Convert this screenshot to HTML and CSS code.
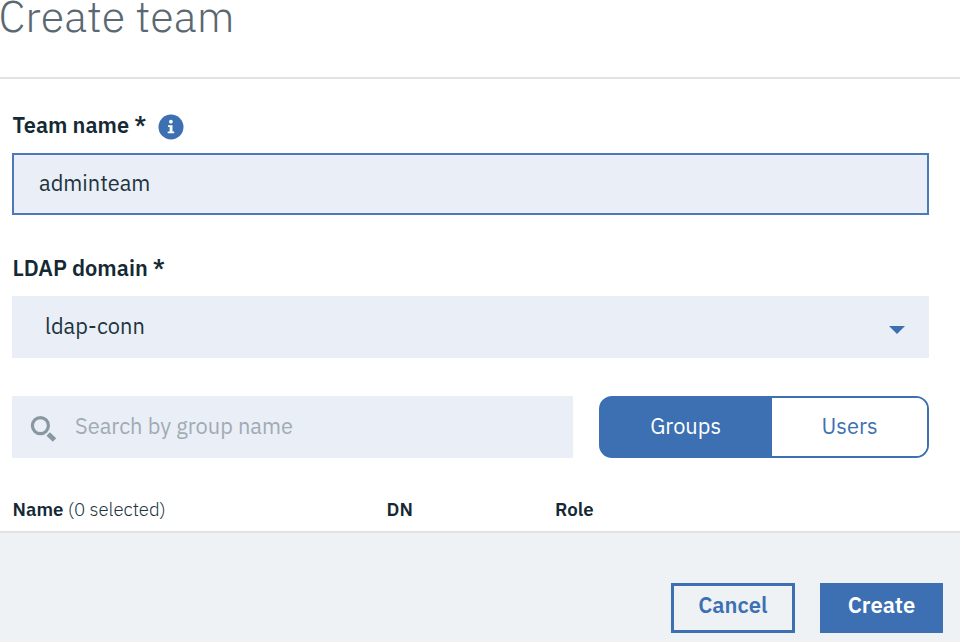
FILE: index.html
```
<!DOCTYPE html>
<html lang="en">
<head>
<meta charset="utf-8">
<title>Create team</title>
<link rel="stylesheet" href="styles.css">
</head>
<body>
<main class="dialog">
  <header class="header"><h1 class="title">Create team</h1></header>
  <section class="form">
    <div class="label label-team"><span class="team-text">Team name *</span>
      <svg class="info" viewBox="0 0 26 26" aria-hidden="true"><circle cx="13" cy="13" r="12.5" fill="#3d70b2"/><circle cx="12.9" cy="7.7" r="1.9" fill="#fff"/><path d="M10 11.2h4.5v6.2h1.7v1.9H9.7v-1.9h1.9v-4.3H10z" fill="#fff"/></svg>
    </div>
    <div class="field field-active"><span class="value-team">adminteam</span></div>
    <div class="label label-domain"><span class="domain-text">LDAP domain *</span></div>
    <div class="field select"><span class="value-domain">ldap-conn</span>
      <svg class="caret" viewBox="0 0 16 8" aria-hidden="true"><path d="M0 0h16L8 8z" fill="#3d70b2"/></svg>
    </div>
    <div class="filters">
      <div class="search">
        <svg class="glass" viewBox="0 0 27 27" aria-hidden="true"><circle cx="10.4" cy="9.6" r="8" fill="none" stroke="#8897a2" stroke-width="3.2"/><path d="M18.2 18l6.3 6" stroke="#8897a2" stroke-width="5"/></svg>
        <span class="placeholder">Search by group name</span>
      </div>
      <div class="switch"><div class="option selected"><span class="groups">Groups</span></div><div class="option"><span class="users">Users</span></div></div>
    </div>
    <div class="columns"><div><b class="name">Name</b> <span class="count">(0 selected)</span></div><b class="dn">DN</b><b class="role">Role</b></div>
  </section>
  <footer class="footer">
    <div class="button cancel"><span class="cancel-text">Cancel</span></div>
    <div class="button create"><span class="create-text">Create</span></div>
  </footer>
</main>
</body>
</html>
```
FILE: styles.css
```
* { box-sizing: border-box; }
body { margin: 0; font-family: "IBM Plex Sans", Roboto, "Liberation Sans", sans-serif; font-size: 21.8px; line-height: 26px; color: #20343f; background: #fff; overflow: hidden; }
span, b { white-space: nowrap; }
.dialog { width: 960px; height: 642px; display: flex; flex-direction: column; overflow: hidden; }
.header { height: 79px; border-bottom: 2px solid #dfe3e6; }
.title { margin: 0 0 0 -1.5px; font-size: 43.2px; line-height: 32px; font-weight: 300; letter-spacing: 0.15px; color: #5a6872; white-space: nowrap; }
.form { height: 452px; padding: 35px 31px 0 12px; }
.label { display: flex; align-items: center; font-size: 21.8px; font-weight: 600; color: #152935; padding-left: 0.5px; }
.label-team { height: 26px; margin-bottom: 13px; gap: 11.5px; }
.team-text { padding-bottom: 4px; }
.info { width: 26px; height: 26px; }
.field { height: 62px; display: flex; align-items: center; background: #eaeef6; }
.field-active { border: 2px solid #4a7ab8; padding: 0 0 3px 25px; }
.label-domain { height: 26px; margin: 41px 0 14px; }
.domain-text { padding-bottom: 3px; }
.select { padding: 0 24px 3px 33px; justify-content: space-between; }
.caret { width: 16px; height: 8px; margin-top: 8px; }
.filters { display: flex; gap: 25.7px; margin-top: 38px; }
.search { width: 561.4px; height: 62px; display: flex; align-items: center; gap: 18px; padding: 0 0 3px 18px; background: #eaeef6; }
.glass { width: 27px; height: 27px; margin-top: 8px; }
.placeholder { color: #a0abb4; }
.switch { flex: 1; display: flex; border: 2px solid #3d70b2; border-radius: 13px; background: linear-gradient(90deg, #3d70b2 50%, #fff 50%); overflow: hidden; }
.option { flex: 1; display: flex; align-items: center; justify-content: center; padding-bottom: 3px; color: #3d70b2; background: #fff; }
.selected { flex: 0 0 171px; padding-right: 2px; background: #3d70b2; color: #fff; }
.columns { display: grid; grid-template-columns: 374px 168.5px 1fr; margin-top: 38px; padding-left: 0.5px; font-size: 18.7px; }
.columns b { font-weight: 600; color: #152935; }
.count { font-weight: 300; letter-spacing: -0.05px; }
.footer { flex: 1; display: flex; justify-content: flex-end; gap: 25px; padding: 50px 17px 0; border-top: 2px solid #dfe3e6; background: #eef2f5; }
.button { height: 50px; display: flex; align-items: center; justify-content: center; padding-bottom: 6px; font-size: 22px; font-weight: 600; }
.cancel { width: 124.4px; border: 3px solid #3d70b2; color: #3d70b2; }
.create { width: 123px; background: #3d70b2; color: #fff; }
```
